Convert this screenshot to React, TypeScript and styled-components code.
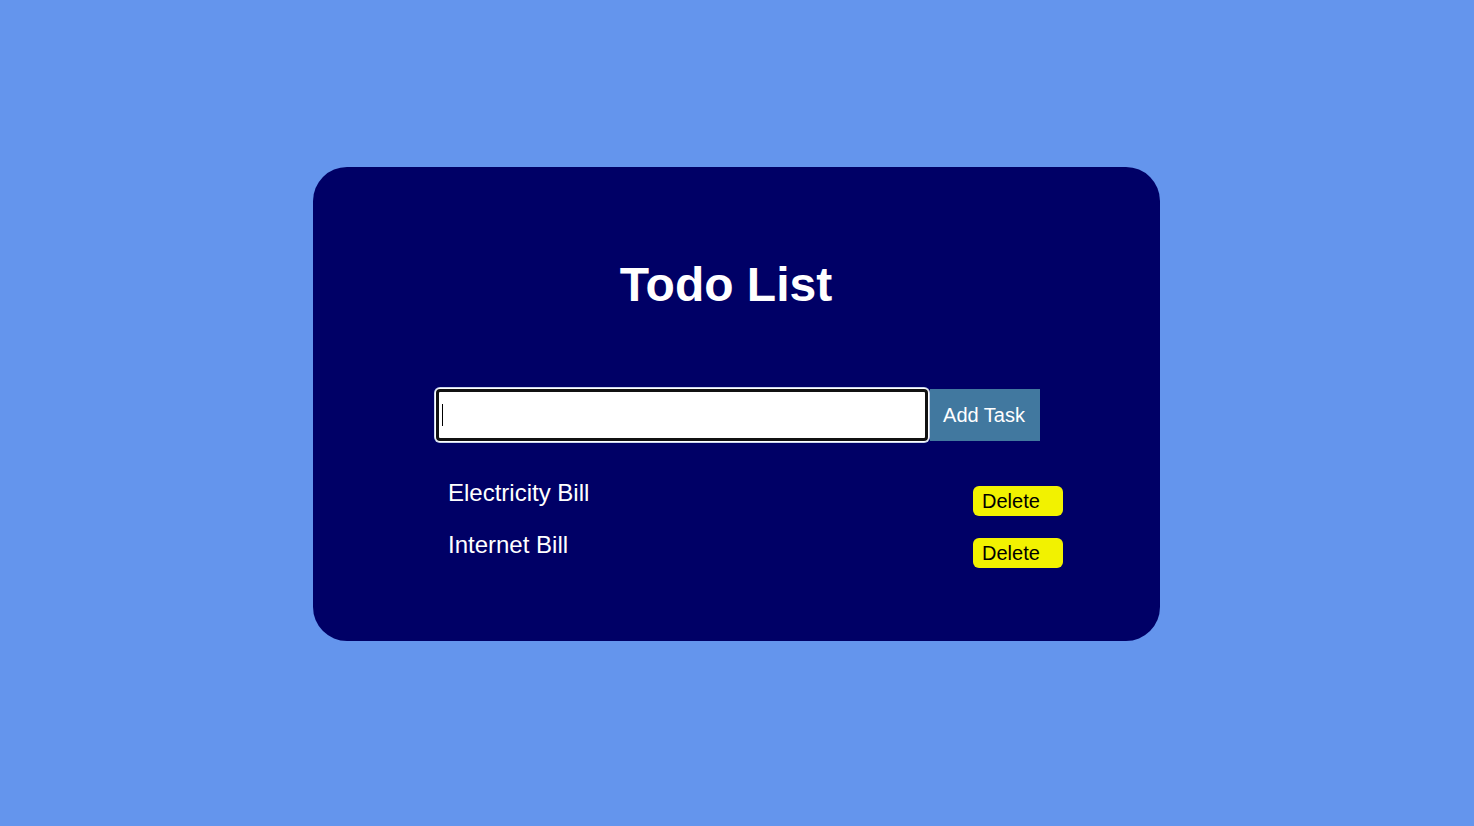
import React from "react";
import styled, { createGlobalStyle } from "styled-components";

const GlobalStyle = createGlobalStyle`
  html, body {
    margin: 0;
    padding: 0;
    background: #6495ed;
    font-family: "Liberation Sans", Arial, sans-serif;
  }
  body {
    min-height: 826px;
  }
  * { box-sizing: border-box; }
`;

const Page = styled.div`
  width: 100%;
  min-height: 826px;
  padding: 167px 1px 0 0;
  display: flex;
  justify-content: center;
  align-items: flex-start;
`;

const Card = styled.div`
  width: 847px;
  height: 474px;
  background: #000066;
  border-radius: 34px;
  padding: 90px 0 0 121px;
  display: flex;
  flex-direction: column;
`;

const Title = styled.h1`
  margin: 0 0 74px;
  width: 584px;
  text-align: center;
  font-size: 48px;
  line-height: 56px;
  font-weight: 700;
  color: #ffffff;
`;

const InputRow = styled.div`
  display: flex;
  align-items: center;
  height: 56px;
`;

const InputWrap = styled.div`
  position: relative;
  margin-left: 2px;
  margin-right: 2px;
`;

const TaskInput = styled.input`
  display: block;
  width: 492px;
  height: 52px;
  border: 3px solid #111111;
  border-radius: 4px;
  box-shadow: 0 0 0 1px #ffffff, 0 0 0 2px #c8d4ea;
  background: #ffffff;
  outline: none;
  padding: 0 5px;
  font-size: 20px;
  font-family: "Liberation Sans", Arial, sans-serif;
`;

const Caret = styled.span`
  position: absolute;
  left: 6px;
  top: 15px;
  width: 1px;
  height: 22px;
  background: #000000;
`;

const AddButton = styled.button`
  width: 110px;
  height: 52px;
  border: none;
  background: #41789f;
  color: #ffffff;
  font-size: 20px;
  font-family: "Liberation Sans", Arial, sans-serif;
  padding: 0 2px 0 0;
  cursor: pointer;
`;

const List = styled.ul`
  list-style: none;
  margin: 36px 0 0;
  padding: 0 0 0 14px;
  display: flex;
  flex-direction: column;
  gap: 15px;
`;

const Item = styled.li`
  width: 615px;
  display: flex;
  justify-content: space-between;
  align-items: flex-start;
`;

const ItemText = styled.span`
  color: #ffffff;
  font-size: 24px;
  line-height: 28px;
`;

const DeleteButton = styled.button`
  margin-top: 7px;
  width: 90px;
  height: 30px;
  border: none;
  border-radius: 6px;
  background: #f2f200;
  color: #000000;
  font-size: 20px;
  font-family: "Liberation Sans", Arial, sans-serif;
  text-align: left;
  padding: 0 0 0 9px;
  cursor: pointer;
`;

const tasks = ["Electricity Bill", "Internet Bill"];

export default function App() {
  return (
    <>
      <GlobalStyle />
      <Page>
        <Card>
          <Title>Todo List</Title>
          <InputRow>
            <InputWrap>
              <TaskInput type="text" />
              <Caret />
            </InputWrap>
            <AddButton>Add Task</AddButton>
          </InputRow>
          <List>
            {tasks.map((t) => (
              <Item key={t}>
                <ItemText>{t}</ItemText>
                <DeleteButton>Delete</DeleteButton>
              </Item>
            ))}
          </List>
        </Card>
      </Page>
    </>
  );
}
